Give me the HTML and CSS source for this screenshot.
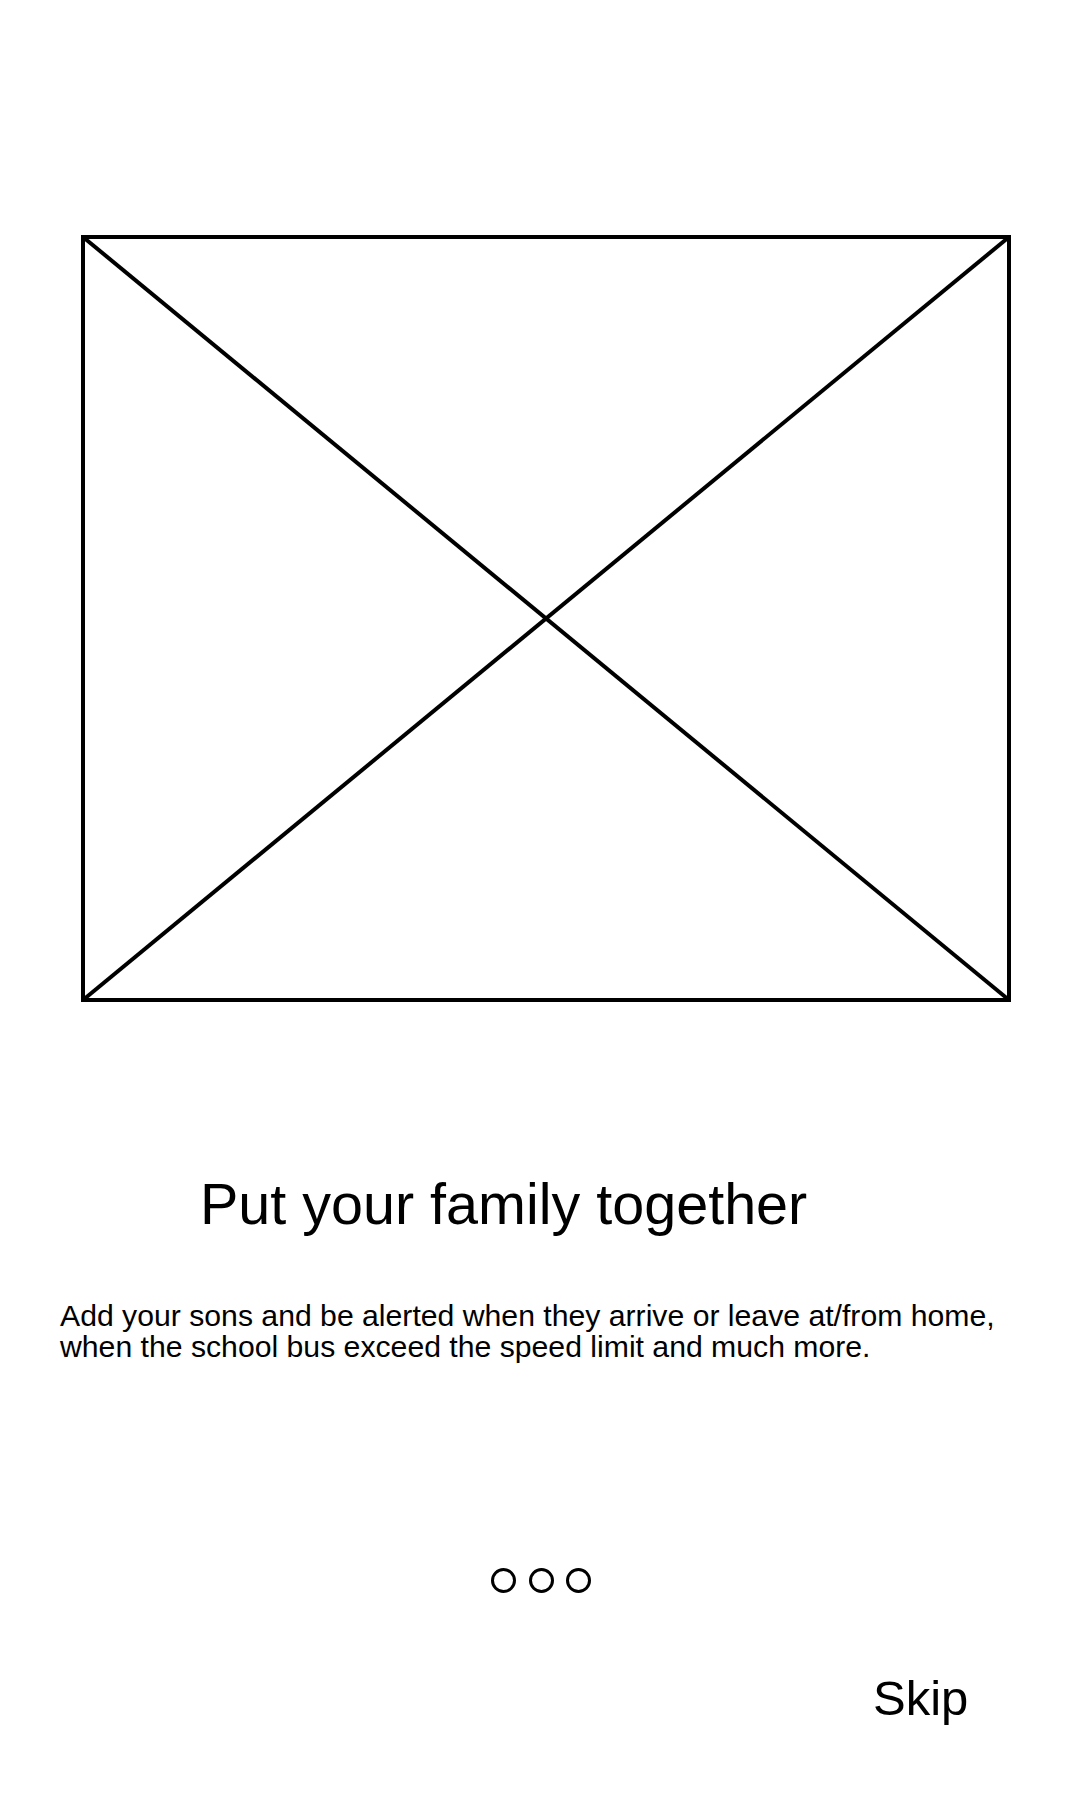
FILE: index.html
```html
<!DOCTYPE html>
<html lang="en">
<head>
<meta charset="utf-8">
<title>Onboarding</title>
<link rel="stylesheet" href="styles.css">
</head>
<body>
<main class="screen">
  <svg class="placeholder" width="930" height="767" viewBox="0 0 930 767" aria-hidden="true">
    <rect x="2" y="2" width="926" height="763" fill="none" stroke="#000" stroke-width="4"/>
    <line x1="2" y1="2" x2="928" y2="765" stroke="#000" stroke-width="4"/>
    <line x1="928" y1="2" x2="2" y2="765" stroke="#000" stroke-width="4"/>
  </svg>
  <h1 class="title">Put your family together</h1>
  <p class="desc">Add your sons and be alerted when they arrive or leave at/from home,<br>when the school bus exceed the speed limit and much more.</p>
  <div class="dots">
    <span class="dot"></span>
    <span class="dot"></span>
    <span class="dot"></span>
  </div>
  <div class="actions">
    <span class="skip">Skip</span>
  </div>
</main>
</body>
</html>
```

FILE: styles.css
```css
html, body {
  margin: 0;
  padding: 0;
  background: #fff;
}
body {
  width: 1080px;
  height: 1800px;
  font-family: "Liberation Sans", Arial, sans-serif;
  color: #000;
}
.screen {
  display: flex;
  flex-direction: column;
}
.placeholder {
  display: block;
  margin: 235px 0 0 81px;
}
.title {
  margin: 169px 0 0 0;
  padding-left: 200px;
  font-size: 57.5px;
  line-height: 66px;
  font-weight: 400;
}
.desc {
  margin: 63px 0 0 0;
  padding-left: 60px;
  font-size: 30.2px;
  line-height: 31px;
}
.dots {
  display: flex;
  justify-content: center;
  gap: 12.5px;
  margin-top: 206px;
  padding-left: 2px;
}
.dot {
  width: 25px;
  height: 25px;
  box-sizing: border-box;
  border: 3px solid #000;
  border-radius: 50%;
}
.actions {
  margin-top: 79px;
  padding-left: 873px;
}
.skip {
  font-size: 49px;
  line-height: 53px;
}
```
